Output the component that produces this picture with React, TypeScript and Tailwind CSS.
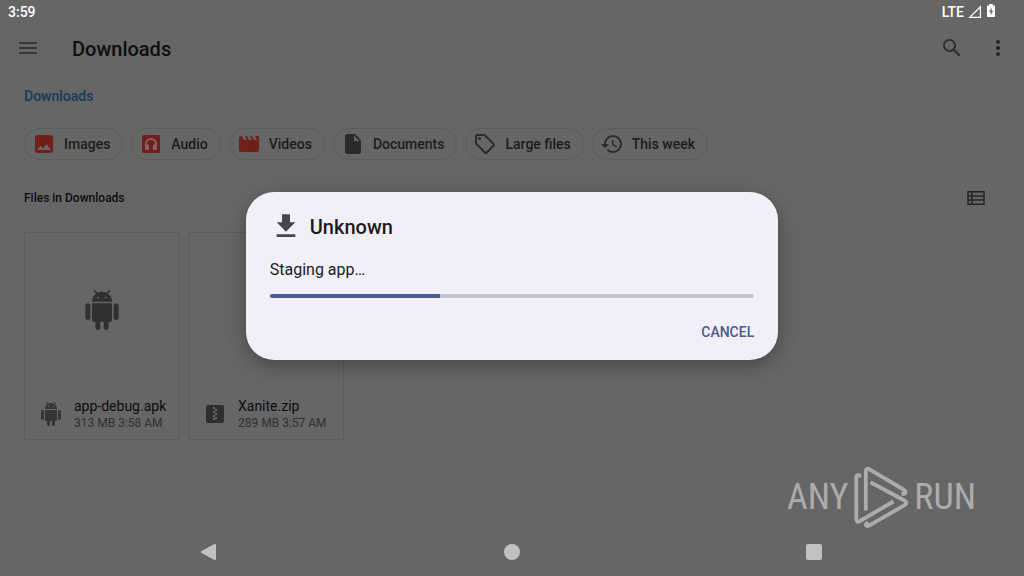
import type { ReactNode } from "react";
import {
  MdHistory,
  MdImage,
  MdInsertDriveFile,
  MdMenu,
  MdMoreVert,
  MdMovie,
  MdOutlineSell,
} from "react-icons/md";

interface Chip {
  label: string;
  icon: ReactNode;
}

interface FileItem {
  name: string;
  details: string;
  icon: ReactNode;
  preview?: ReactNode;
}

function AndroidIcon({ className }: { className: string }) {
  return (
    <svg viewBox="0 0 24 24" fill="currentColor" className={className} aria-hidden="true">
      <path d="M6 18c0 .55.45 1 1 1h1v3.5c0 .83.67 1.5 1.5 1.5s1.5-.67 1.5-1.5V19h2v3.5c0 .83.67 1.5 1.5 1.5s1.5-.67 1.5-1.5V19h1c.55 0 1-.45 1-1V8H6v10zM3.5 8C2.67 8 2 8.67 2 9.5v7c0 .83.67 1.5 1.5 1.5S5 17.33 5 16.5v-7C5 8.67 4.33 8 3.5 8zm17 0c-.83 0-1.5.67-1.5 1.5v7c0 .83.67 1.5 1.5 1.5s1.5-.67 1.5-1.5v-7c0-.83-.67-1.5-1.5-1.5zm-4.97-5.84l1.3-1.3c.2-.2.2-.51 0-.71-.2-.2-.51-.2-.71 0l-1.48 1.48C13.85 1.23 12.95 1 12 1c-.96 0-1.86.23-2.66.63L7.85.15c-.2-.2-.51-.2-.71 0-.2.2-.2.51 0 .71l1.31 1.31C6.97 3.26 6 5.01 6 7h12c0-1.99-.97-3.75-2.47-4.84zM10 5H9V4h1v1zm5 0h-1V4h1v1z" />
    </svg>
  );
}

function AudioIcon() {
  return (
    <svg viewBox="0 0 24 24" className="size-6" aria-hidden="true">
      <rect x="3" y="3" width="18" height="18" rx="1.5" fill="#701f1b" />
      <path d="M7 17v-5a5 5 0 0 1 10 0v5" fill="none" stroke="#846462" strokeWidth="2" />
      <path d="M6 12.5h4V18H7a1 1 0 0 1-1-1zM14 12.5h4V17a1 1 0 0 1-1 1h-3z" fill="#846462" />
    </svg>
  );
}

function ZipIcon() {
  return (
    <svg viewBox="0 0 24 24" className="size-6" aria-hidden="true">
      <rect x="3" y="3" width="18" height="18" rx="2" fill="#2e2e2e" />
      <path
        d="M10 5h2v2h-2zM12 7h2v2h-2zM10 9h2v2h-2zM12 11h2v2h-2zM10 13h2v2h-2zM12 15h2v2h-2zM10 16h2v2h-2z"
        fill="#666666"
      />
    </svg>
  );
}

const chips: Chip[] = [
  { label: "Images", icon: <MdImage className="size-6 text-[#701f1b]" /> },
  { label: "Audio", icon: <AudioIcon /> },
  { label: "Videos", icon: <MdMovie className="size-6 text-[#701f1b]" /> },
  { label: "Documents", icon: <MdInsertDriveFile className="size-6 text-[#2b2b2b]" /> },
  { label: "Large files", icon: <MdOutlineSell className="size-6 text-[#2b2b2b]" /> },
  { label: "This week", icon: <MdHistory className="size-6 text-[#2b2b2b]" /> },
];

const files: FileItem[] = [
  {
    name: "app-debug.apk",
    details: "313 MB 3:58 AM",
    icon: <AndroidIcon className="size-6 text-[#353535]" />,
    preview: <AndroidIcon className="size-10 text-[#303030]" />,
  },
  { name: "Xanite.zip", details: "289 MB 3:57 AM", icon: <ZipIcon /> },
];

function StatusBar() {
  return (
    <div className="flex h-6 items-center justify-between pr-7 pl-2 text-sm font-medium text-white">
      <span>3:59</span>
      <div className="flex items-center gap-1">
        <span>LTE</span>
        <svg viewBox="0 0 14 14" className="size-3.5" fill="none" stroke="currentColor" aria-hidden="true">
          <path d="M12.4 1.8v10.6H1.8z" strokeWidth="1.2" />
        </svg>
        <svg viewBox="0 0 10 16" className="h-4 w-2.5" aria-hidden="true">
          <path d="M3.2 0h3.6v1.5h1.5a.7.7 0 0 1 .7.7v10.1a.7.7 0 0 1-.7.7H1.7a.7.7 0 0 1-.7-.7V2.2a.7.7 0 0 1 .7-.7h1.5z" fill="#fff" />
          <path d="M5.6 3.5 3 7.8h1.6v3.4L7.2 7H5.6z" fill="#666" />
        </svg>
      </div>
    </div>
  );
}

function FileCard({ file }: { file: FileItem }) {
  return (
    <li className="flex h-52 w-39 flex-col rounded-xs border border-[#5b5b5b]">
      <div className="flex flex-1 items-center justify-center">{file.preview}</div>
      <div className="flex h-13 items-center gap-[11px] pt-0.5 pl-3.5">
        <span className="shrink-0">{file.icon}</span>
        <div className="whitespace-nowrap">
          <p className="text-sm leading-[18px] text-[#0c0c0c]">{file.name}</p>
          <p className="text-xs leading-4 text-[#303030]">{file.details}</p>
        </div>
      </div>
    </li>
  );
}

function InstallDialog() {
  return (
    <div className="absolute inset-x-0 top-6 bottom-12 flex items-center justify-center">
      <div
        role="dialog"
        aria-labelledby="dialog-title"
        className="flex w-[52%] flex-col rounded-[28px] bg-[#f1eff8] px-6 pt-[19px] pb-2.5 shadow-[0_6px_20px_rgba(0,0,0,0.3)]"
      >
        <div className="flex items-center gap-2">
          <svg viewBox="0 0 24 24" className="size-8 text-[#45464f]" fill="currentColor" aria-hidden="true">
            <path d="M19 8.5h-4v-6H9v6H5l7 7zM5 17.5v2h14v-2z" />
          </svg>
          <h2 id="dialog-title" className="text-xl leading-8 font-medium text-[#1b1b21]">
            Unknown
          </h2>
        </div>
        <p className="mt-[15px] text-base text-[#1b1b21]">Staging app…</p>
        <div
          role="progressbar"
          aria-label="Staging app"
          aria-valuenow={35}
          className="mt-3 h-1 overflow-hidden rounded-full bg-[#c6c5d0]"
        >
          <div className="h-full bg-[#4c5b92]" style={{ width: "35.2%" }} />
        </div>
        <button type="button" className="mt-4 h-9 self-end text-sm font-medium text-[#4c5b92]">
          CANCEL
        </button>
      </div>
    </div>
  );
}

function Watermark() {
  return (
    <div className="absolute right-12 bottom-[45px] flex items-center font-['Roboto_Condensed','Liberation_Sans_Narrow',Roboto,sans-serif] text-4xl leading-none font-normal text-[#acacac]">
      <span>ANY</span>
      <svg
        viewBox="0 0 66 68"
        className="h-17 w-16.5"
        fill="none"
        stroke="currentColor"
        strokeWidth="3.8"
        strokeLinejoin="round"
        aria-hidden="true"
      >
        <path d="M11.5 14.5V12.3Q8.3 11 8.3 14V55.5Q8.3 60.5 12 58L45.5 38.5" />
        <path d="M17.8 47.5V8.5Q17.8 4.2 21.5 6.3L55.5 26.5Q58.5 28.5 57 30.5L53.5 31" />
        <path d="M22.5 19.3 56 37.2Q60.5 39.8 56.5 42.2L21.5 62.3Q18 64 17.8 61.5L20 59" />
      </svg>
      <span>RUN</span>
    </div>
  );
}

export default function App() {
  return (
    <div className="relative flex min-h-screen flex-col bg-[#666666] font-[Roboto,sans-serif]">
      <StatusBar />

      <header className="flex h-12 items-center pr-3.5 pl-4 text-[#242424]">
        <button type="button" aria-label="Open menu">
          <MdMenu className="size-6 text-[#373737]" />
        </button>
        <h1 className="ml-8 flex-1 pt-0.5 text-xl font-medium text-[#0e0e0e]">Downloads</h1>
        <button type="button" aria-label="Search">
          <svg viewBox="0 0 24 24" className="size-6" fill="none" stroke="#2b2b2b" strokeWidth="1.7" aria-hidden="true">
            <circle cx="9.5" cy="9.5" r="5.6" />
            <path d="m13.8 13.8 6 6" strokeWidth="2" />
          </svg>
        </button>
        <button type="button" aria-label="More options" className="ml-5.5">
          <MdMoreVert className="size-6" />
        </button>
      </header>

      <main className="flex flex-1 flex-col px-6">
        <nav className="flex h-12 items-center">
          <a href="#downloads" className="text-sm font-medium text-[#17395c]">
            Downloads
          </a>
        </nav>

        <div className="mt-2 flex gap-2">
          {chips.map((chip) => (
            <button
              key={chip.label}
              type="button"
              className="flex h-8 items-center gap-2 rounded-full border border-[#5b5b5b] pr-3 pl-[7px] text-sm font-medium text-[#1b1b1b]"
            >
              {chip.icon}
              {chip.label}
            </button>
          ))}
        </div>

        <div className="mt-6.5 flex h-6 items-center justify-between pr-3">
          <h2 className="text-xs font-medium text-[#0e0e0e]">Files in Downloads</h2>
          <button type="button" aria-label="List view">
            <svg viewBox="0 0 24 24" className="size-6" fill="none" stroke="#242424" strokeWidth="1.5" aria-hidden="true">
              <path d="M4 5.8h16v12.4H4zM4 10h16M4 14h16M8 5.8v12.4" />
            </svg>
          </button>
        </div>

        <ul className="mt-5.5 flex gap-2">
          {files.map((file) => (
            <FileCard key={file.name} file={file} />
          ))}
        </ul>
      </main>

      <nav className="flex h-12 items-center justify-between pr-[19.7%] pl-[19.5%]" aria-label="System navigation">
        <button type="button" aria-label="Back">
          <svg viewBox="0 0 18 18" className="size-4.5" aria-hidden="true">
            <path d="M2 9 15 2v14z" fill="#c1c1c1" stroke="#c1c1c1" strokeWidth="2" strokeLinejoin="round" />
          </svg>
        </button>
        <button type="button" aria-label="Home" className="size-4 rounded-full bg-[#c1c1c1]" />
        <button type="button" aria-label="Recent apps" className="size-4 rounded-xs bg-[#c1c1c1]" />
      </nav>

      <InstallDialog />
      <Watermark />
    </div>
  );
}
